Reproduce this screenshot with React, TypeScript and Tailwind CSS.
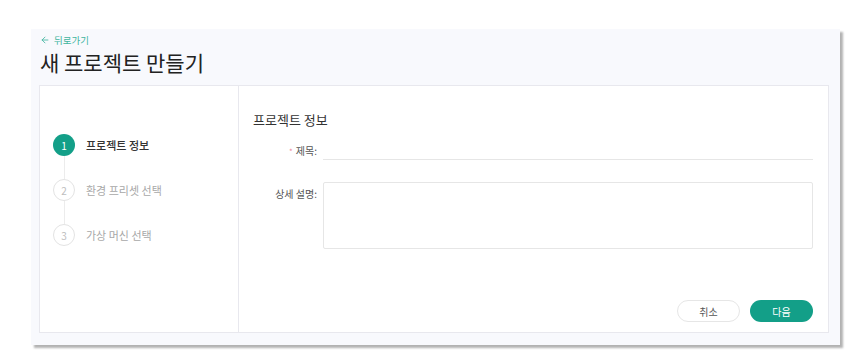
import { ArrowLeft } from "lucide-react";

const steps = [
  { no: 1, label: "프로젝트 정보", active: true },
  { no: 2, label: "환경 프리셋 선택", active: false },
  { no: 3, label: "가상 머신 선택", active: false },
];

function StepList() {
  return (
    <div className="flex flex-col pl-[13px] pt-[48px]">
      {steps.map((s, i) => (
        <div key={s.no} className="flex flex-col">
          <div className="flex items-center gap-[11px]">
            {s.active ? (
              <div className="w-[22px] h-[22px] rounded-full bg-[#139f88] text-white text-[10px] flex items-center justify-center">
                {s.no}
              </div>
            ) : (
              <div className="w-[22px] h-[22px] rounded-full border border-[#e3e3e3] text-[#bdbdbd] text-[10px] flex items-center justify-center">
                {s.no}
              </div>
            )}
            <span
              className={
                s.active
                  ? "text-[11px] text-[#333] font-medium"
                  : "text-[11px] text-[#a8a8a8]"
              }
            >
              {s.label}
            </span>
          </div>
          {i < steps.length - 1 && <div className="ml-[10.5px] w-px h-[23px] bg-[#ececec]" />}
        </div>
      ))}
    </div>
  );
}

export default function App() {
  return (
    <div
      className="w-[858px] h-[363px] bg-white pt-[29px] pl-[31px]"
      style={{ fontFamily: '"Noto Sans CJK KR", "Noto Sans", sans-serif' }}
    >
      <div className="w-[809px] h-[316px] bg-[#f8f9fd] shadow-[3px_3px_2px_rgba(0,0,0,0.3)] pl-[8px] pr-[11px] flex flex-col">
        <div className="flex items-center gap-[4px] mt-[5px] h-[12px] text-[#3fb59f] text-[9.5px] pl-[1px]">
          <ArrowLeft size={10} strokeWidth={2} />
          <span>뒤로가기</span>
        </div>
        <h1 className="text-[21px] leading-[24px] text-[#222] mt-[4px] pl-[1px]">새 프로젝트 만들기</h1>

        <div className="mt-[11px] h-[248px] bg-white border border-[#e8e8ee] flex">
          <div className="w-[199px] border-r border-[#e8e8ee]">
            <StepList />
          </div>

          <div className="flex-1 flex flex-col pl-[14px] pr-[15px] pb-[10px]">
            <div className="mt-[24px] text-[13px] leading-[20px] text-[#333]">프로젝트 정보</div>

            <div className="flex mt-[11px]">
              <div className="w-[64px] text-right text-[10px] text-[#555] pt-[2px]">
                <span className="text-[#f08a9a] text-[8px] mr-[3px]">*</span>제목:
              </div>
              <div className="flex-1 ml-[6px] h-[19px] border-b border-[#e6e6e6]" />
            </div>

            <div className="flex mt-[22px]">
              <div className="w-[64px] text-right text-[10px] text-[#555] pt-[4px]">상세 설명:</div>
              <div className="flex-1 ml-[6px] h-[67px] border border-[#e6e6e6] rounded-[2px]" />
            </div>

            <div className="mt-auto flex justify-end gap-[10px]">
              <button className="w-[63px] h-[22px] rounded-full border border-[#e6e6e6] bg-white text-[10px] text-[#555]">
                취소
              </button>
              <button className="w-[63px] h-[22px] rounded-full bg-[#139f88] text-[10px] text-white">
                다음
              </button>
            </div>
          </div>
        </div>
      </div>
    </div>
  );
}
